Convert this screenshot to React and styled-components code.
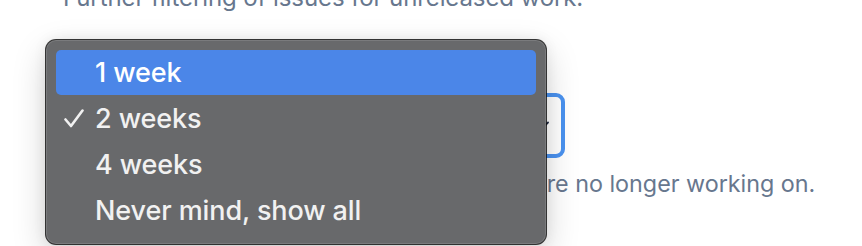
import React from 'react';
import styled, { createGlobalStyle } from 'styled-components';

const theme = {
  pageBg: '#FFFFFF',
  textSub: '#67778E',
  focus: '#4A92F0',
  chevron: '#1F2A44',
  menuBg: '#68696B',
  menuText: '#F1F1F1',
  highlight: '#4B86E8',
};

const options = [
  { label: '1 week', active: true },
  { label: '2 weeks', checked: true },
  { label: '4 weeks' },
  { label: 'Never mind, show all' },
];

const GlobalStyle = createGlobalStyle`
  html, body {
    margin: 0;
    padding: 0;
    background: ${theme.pageBg};
    overflow: hidden;
  }
`;

const Page = styled.div`
  position: relative;
  height: 246px;
  padding-left: 63px;
  font-family: 'Inter', 'Helvetica Neue', sans-serif;
  overflow: hidden;
`;

const Hint = styled.p`
  margin: 0;
  font-size: 24px;
  line-height: 30px;
  color: ${theme.textSub};
  white-space: nowrap;
`;

const TopHint = styled(Hint)`
  margin-top: -17px;
  letter-spacing: -0.1px;
`;

const BottomHint = styled(Hint)`
  margin-top: 11px;
  font-size: 23.3px;
`;

const Select = styled.div`
  box-sizing: border-box;
  margin-top: 80px;
  width: 502px;
  height: 65px;
  border: 4px solid ${theme.focus};
  border-radius: 9px;
  display: flex;
  align-items: center;
  justify-content: space-between;
  padding: 0 12px 0 20px;
  font-size: 25px;
  color: ${theme.chevron};
`;

const Chevron = () => (
  <svg width="14" height="9" viewBox="0 0 14 9" fill="none">
    <path d="M1 1.5 L7 7.5 L13 1.5" stroke={theme.chevron} strokeWidth="1.8" strokeLinecap="round" strokeLinejoin="round" />
  </svg>
);

const Menu = styled.ul`
  position: absolute;
  left: 46px;
  top: 40px;
  width: 500px;
  box-sizing: border-box;
  margin: 0;
  padding: 10px 10px 11px;
  list-style: none;
  background: ${theme.menuBg};
  border-radius: 10px;
  box-shadow:
    0 0 0 1px rgba(20, 20, 20, 0.85),
    inset 0 0 0 1px rgba(255, 255, 255, 0.12),
    0 12px 34px rgba(0, 0, 0, 0.18),
    0 0 14px rgba(0, 0, 0, 0.08);
`;

const Item = styled.li`
  display: grid;
  grid-template-columns: 39px 1fr;
  align-items: center;
  height: ${(p) => (p.$first ? 45 : 46)}px;
  border-radius: 5px;
  background: ${(p) => (p.$active ? theme.highlight : 'transparent')};
  color: ${(p) => (p.$active ? '#FFFFFF' : theme.menuText)};
  font-size: 27px;
  font-weight: 500;
  letter-spacing: -0.1px;
`;

const CheckCell = styled.span`
  display: flex;
  align-items: center;
  justify-content: flex-end;
  padding-right: 11px;
`;

const Check = () => (
  <svg width="20" height="19" viewBox="0 0 20 19" fill="none">
    <path d="M1.5 10.5 L7 17 L18.5 1.5" stroke={theme.menuText} strokeWidth="2.6" strokeLinecap="round" strokeLinejoin="round" />
  </svg>
);

const App = () => {
  return (
    <Page>
      <GlobalStyle />
      <TopHint>Further filtering of issues for unreleased work.</TopHint>
      <Select>
        <span>2 weeks</span>
        <Chevron />
      </Select>
      <BottomHint>Hide issues from all of the projects that you&rsquo;re no longer working on.</BottomHint>
      <Menu>
        {options.map((o, i) => (
          <Item key={o.label} $active={o.active} $first={i === 0}>
            <CheckCell>{o.checked && <Check />}</CheckCell>
            <span>{o.label}</span>
          </Item>
        ))}
      </Menu>
    </Page>
  );
};

export default App;
